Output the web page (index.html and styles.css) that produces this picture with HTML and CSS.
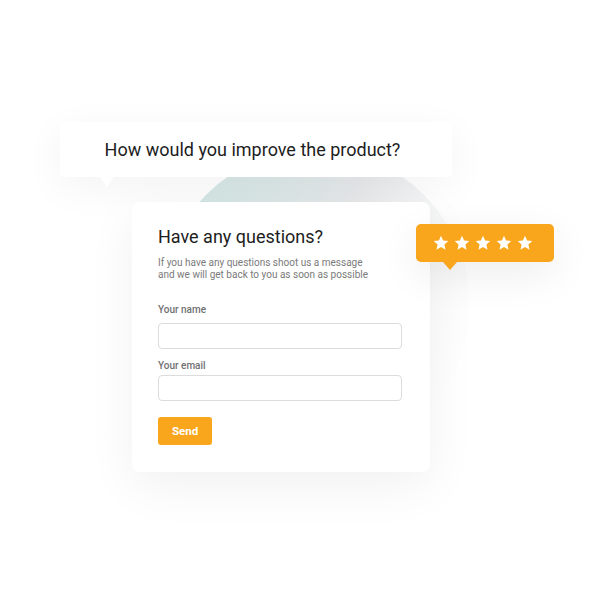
FILE: index.html
```html
<!DOCTYPE html>
<html>
<head>
    <title>Contact form widget</title>
    <meta charset="UTF-8">
    <meta name="viewport" content="width=device-width, initial-scale=1.0">
    <link rel="stylesheet" href="styles.css">
</head>
<body>
    <div class="stage">
        <div class="blob"></div>

        <div class="bubble question">
            How would you improve the product?
        </div>

        <div class="card">
            <h2>Have any questions?</h2>
            <p>If you have any questions shoot us a message<br>and we will get back to you as soon as possible</p>

            <label class="name-label" for="name">Your name</label>
            <input type="text" id="name">

            <label class="email-label" for="email">Your email</label>
            <input type="text" id="email">

            <button>Send</button>
        </div>

        <div class="bubble rating">
            <svg class="star" viewBox="0 0 24 24"><polygon points="12,1 15.2,8.2 23,9 17.1,14.2 18.8,22 12,18 5.2,22 6.9,14.2 1,9 8.8,8.2"/></svg>
            <svg class="star" viewBox="0 0 24 24"><polygon points="12,1 15.2,8.2 23,9 17.1,14.2 18.8,22 12,18 5.2,22 6.9,14.2 1,9 8.8,8.2"/></svg>
            <svg class="star" viewBox="0 0 24 24"><polygon points="12,1 15.2,8.2 23,9 17.1,14.2 18.8,22 12,18 5.2,22 6.9,14.2 1,9 8.8,8.2"/></svg>
            <svg class="star" viewBox="0 0 24 24"><polygon points="12,1 15.2,8.2 23,9 17.1,14.2 18.8,22 12,18 5.2,22 6.9,14.2 1,9 8.8,8.2"/></svg>
            <svg class="star" viewBox="0 0 24 24"><polygon points="12,1 15.2,8.2 23,9 17.1,14.2 18.8,22 12,18 5.2,22 6.9,14.2 1,9 8.8,8.2"/></svg>
        </div>
    </div>
</body>
</html>
```

FILE: styles.css
```css
body {
    font-family: Roboto, "Liberation Sans", sans-serif;
    background-color: #ffffff;
    margin: 0;
}
.stage {
    position: relative;
    width: 600px;
    height: 600px;
    overflow: hidden;
    padding-top: 202px;
    box-sizing: border-box;
}
.blob {
    position: absolute;
    left: 160px;
    top: 150px;
    width: 310px;
    height: 310px;
    border-radius: 50%;
    background: linear-gradient(120deg, #cfe8e4 0%, #dce8e7 28%, #e7e9eb 45%, #f3f4f5 58%, rgba(248, 248, 249, 0.5) 72%, rgba(255, 255, 255, 0) 90%);
}
.bubble {
    position: absolute;
    border-radius: 5px;
}
.bubble::after {
    content: "";
    position: absolute;
    width: 0;
    height: 0;
    border-left: 7px solid transparent;
    border-right: 7px solid transparent;
    top: 100%;
}
.question {
    left: 60px;
    top: 122px;
    width: 392px;
    height: 55px;
    padding-right: 7px;
    box-sizing: border-box;
    background-color: #ffffff;
    box-shadow: 0 10px 40px rgba(0, 0, 0, 0.05);
    font-size: 18px;
    color: #1d1d1d;
    display: flex;
    align-items: center;
    justify-content: center;
}
.question::after {
    left: 40px;
    border-top: 10px solid #ffffff;
}
.card {
    position: relative;
    width: 298px;
    height: 270px;
    margin-left: 132px;
    padding: 24px 26px 0;
    box-sizing: border-box;
    background-color: #ffffff;
    border-radius: 8px;
    box-shadow: 0 14px 50px rgba(0, 0, 0, 0.06);
}
h2 {
    margin: 0;
    font-size: 18px;
    line-height: 22px;
    font-weight: 400;
    color: #1d1d1d;
}
p {
    margin: 9px 0 0;
    font-size: 10px;
    line-height: 12px;
    color: #7a7a7a;
}
label {
    display: block;
    font-size: 10px;
    line-height: 12px;
    font-weight: 500;
    color: #707070;
}
.name-label {
    margin: 23px 0 7px;
}
.email-label {
    margin: 11px 0 3px;
}
input {
    display: block;
    width: 244px;
    height: 26px;
    margin: 0;
    border: 1px solid #dcdcdc;
    border-radius: 4px;
    background-color: #ffffff;
    box-sizing: border-box;
}
button {
    display: block;
    margin-top: 16px;
    width: 54px;
    height: 28px;
    padding: 0;
    border: none;
    border-radius: 3px;
    background-color: #f9a61c;
    color: #ffffff;
    font-family: Roboto, "Liberation Sans", sans-serif;
    font-size: 11.5px;
    font-weight: 700;
}
.rating {
    left: 416px;
    top: 224px;
    width: 138px;
    height: 38px;
    background-color: #f9a61c;
    box-shadow: 0 12px 40px rgba(0, 0, 0, 0.08);
    display: flex;
    align-items: center;
    gap: 5px;
    padding-left: 17px;
    box-sizing: border-box;
}
.rating::after {
    left: 27px;
    border-top: 8px solid #f9a61c;
}
.star {
    width: 16px;
    height: 16px;
    fill: #ffffff;
}
```
